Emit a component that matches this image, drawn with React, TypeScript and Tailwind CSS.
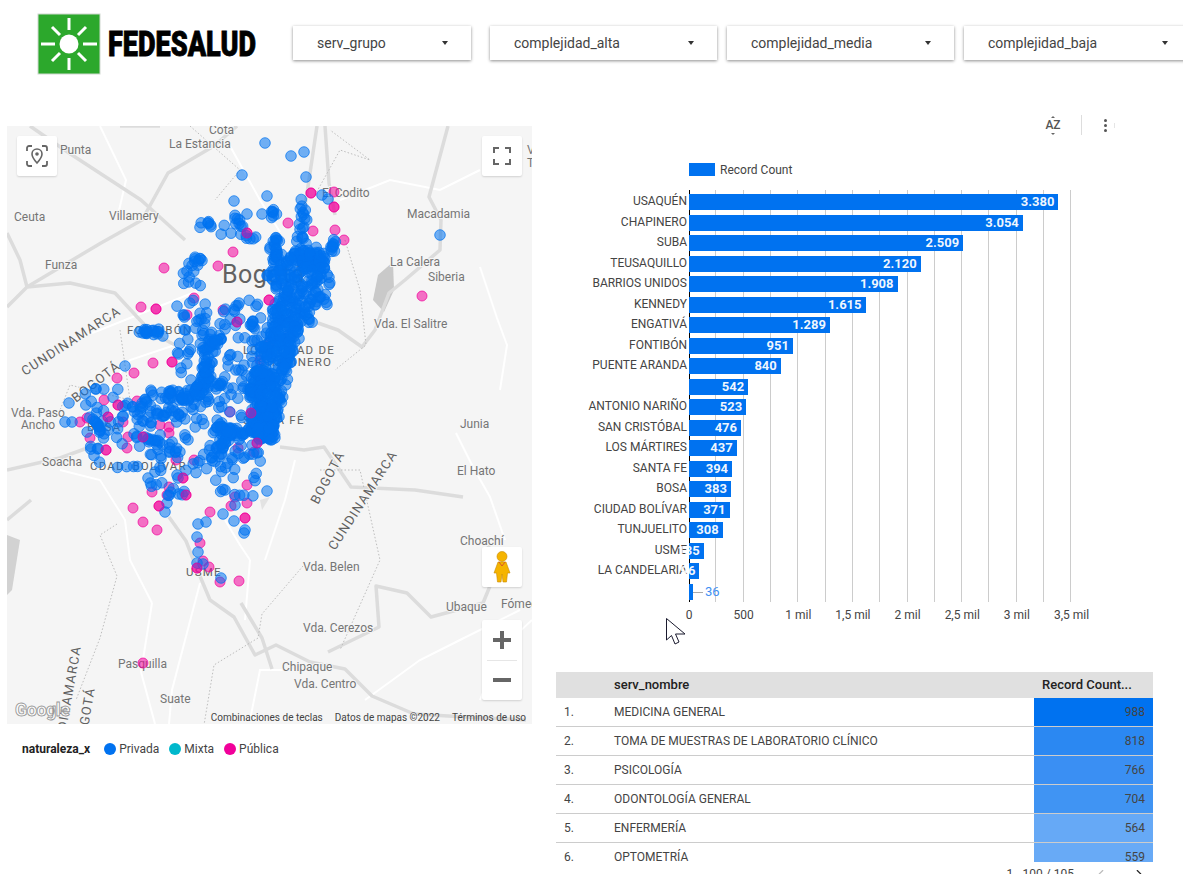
import { ChevronLeft, ChevronRight } from "lucide-react";

type Dot = { x: number; y: number; pink?: boolean };

const BLUE = "#0072f0";
const PINK = "#f1009a";

// seeded so that the picture is the same on every load
let seed = 12345;
function rnd() {
  seed = (seed * 16807) % 2147483647;
  return (seed - 1) / 2147483646;
}

function strand(points: number[][], n: number, jitter: number): Dot[] {
  const out: Dot[] = [];
  for (let i = 0; i < n; i++) {
    const t = rnd() * (points.length - 1);
    const k = Math.floor(t);
    const f = t - k;
    const a = points[k];
    const b = points[k + 1];
    out.push({
      x: a[0] + (b[0] - a[0]) * f + (rnd() - 0.5) * jitter * 2,
      y: a[1] + (b[1] - a[1]) * f + (rnd() - 0.5) * jitter * 2,
    });
  }
  return out;
}

function cloud(x0: number, y0: number, x1: number, y1: number, n: number): Dot[] {
  const out: Dot[] = [];
  for (let i = 0; i < n; i++) {
    out.push({ x: x0 + rnd() * (x1 - x0), y: y0 + rnd() * (y1 - y0) });
  }
  return out;
}

// the solid part of the city: [y, left, right]
const massSlabs = [
  [250, 290, 318],
  [265, 262, 332],
  [285, 272, 330],
  [305, 276, 326],
  [325, 268, 304],
  [345, 262, 296],
  [365, 256, 290],
  [385, 250, 286],
  [405, 246, 280],
  [425, 254, 278],
  [440, 258, 272],
];

function massDots(): Dot[] {
  const out: Dot[] = [];
  for (let i = 0; i < massSlabs.length - 1; i++) {
    const a = massSlabs[i];
    const b = massSlabs[i + 1];
    out.push(...cloud((a[1] + b[1]) / 2, a[0], (a[2] + b[2]) / 2, b[0], 55));
  }
  return out;
}

const blueDots: Dot[] = [
  ...cloud(176, 300, 262, 420, 130),
  ...cloud(85, 385, 245, 470, 120),
  ...cloud(150, 440, 262, 500, 45),
  ...strand([[303, 199], [303, 226], [300, 259], [312, 262], [323, 266]], 45, 5),
  ...strand([[277, 236], [273, 253], [282, 280]], 26, 4),
  ...strand([[234, 216], [243, 233], [253, 241]], 14, 4),
  ...strand([[197, 224], [213, 226], [233, 239]], 10, 5),
  ...strand([[277, 206], [273, 216]], 7, 3),
  ...strand([[187, 254], [202, 256], [193, 263], [183, 281], [200, 289], [217, 279]], 18, 5),
  ...strand([[335, 233], [333, 249], [323, 266], [318, 240]], 16, 3),
  ...strand([[135, 410], [159, 393], [189, 397], [206, 380]], 55, 5),
  ...strand([[206, 380], [210, 347], [216, 332]], 40, 7),
  ...strand([[216, 430], [240, 432], [270, 430]], 45, 4),
  ...strand([[210, 463], [223, 443], [230, 432]], 25, 4),
  ...strand([[160, 412], [175, 412]], 14, 5),
  ...strand([[95, 420], [100, 432]], 9, 2),
  ...strand([[140, 330], [165, 335]], 18, 4),
  ...strand([[150, 440], [175, 452]], 14, 4),
  { x: 265, y: 143 }, { x: 291, y: 156 }, { x: 304, y: 152 }, { x: 242, y: 175 }, { x: 306, y: 177 },
  { x: 440, y: 235 }, { x: 234, y: 201 }, { x: 267, y: 196 }, { x: 262, y: 214 }, { x: 247, y: 214 },
  { x: 322, y: 195 }, { x: 328, y: 199 }, { x: 125, y: 366 }, { x: 69, y: 403 }, { x: 65, y: 422 },
  { x: 72, y: 422 }, { x: 267, y: 491 }, { x: 167, y: 503 }, { x: 165, y: 512 }, { x: 198, y: 524 },
  { x: 206, y: 522 }, { x: 223, y: 514 }, { x: 234, y: 521 }, { x: 245, y: 530 }, { x: 244, y: 533 },
  { x: 235, y: 505 }, { x: 197, y: 537 }, { x: 198, y: 552 }, { x: 197, y: 563 }, { x: 203, y: 564 },
  { x: 221, y: 578 }, { x: 155, y: 472 }, { x: 148, y: 478 }, { x: 178, y: 478 }, { x: 225, y: 490 },
  ...massDots(),
];

const pinkDots: Dot[] = [
  [311, 193], [334, 192], [344, 240], [335, 230], [334, 207], [422, 296], [164, 268], [141, 307], [156, 309],
  [194, 298], [187, 315], [153, 363], [172, 362], [134, 373], [117, 378], [104, 400], [118, 405], [137, 401],
  [80, 422], [87, 418], [108, 417], [123, 422], [90, 438], [128, 437], [143, 437], [160, 425], [169, 427],
  [169, 433], [106, 450], [127, 448], [176, 460], [194, 460], [183, 478], [169, 487], [152, 492], [167, 495],
  [186, 495], [247, 485], [235, 497], [230, 412], [251, 413], [274, 408], [238, 448], [254, 452], [257, 443],
  [233, 252], [218, 266], [223, 310], [269, 300], [270, 342], [270, 380], [260, 360], [237, 322], [133, 508],
  [143, 522], [157, 530], [159, 506], [210, 512], [231, 506], [247, 503], [245, 518], [200, 543], [203, 561],
  [209, 567], [197, 568], [220, 582], [239, 581], [143, 663], [247, 233], [288, 223], [313, 231],
].map(([x, y]) => ({ x, y }));

const grayRoads = [
  "M7 307 L27 287 L70 283 L115 293 L152 333 L175 345",
  "M27 287 L101 243 L142 220 L168 173 L214 146 L237 126",
  "M30 126 L69 153 L141 200 L185 240",
  "M7 233 L20 260 L27 287",
  "M317 126 L306 200 L300 225",
  "M325 126 L329 183 L335 215",
  "M318 323 L338 330 L362 347 L375 330 L389 293 L405 280 L440 250 L441 220 L429 197 L448 126",
  "M169 517 L186 541 L197 569 L210 600 L234 617 L255 655 L276 645 L310 662 L345 669 L372 696 L414 714 L465 717 L526 720",
  "M241 603 L262 638 L272 669",
  "M328 652 L379 627 L376 586 L407 593 L431 617 L483 603 L497 569 L488 545",
  "M280 447 L304 450 L324 447 L351 487 L415 490 L463 497",
  "M7 470 L60 458 L101 443",
  "M7 520 L31 500",
  "M160 126 L120 126",
];

const whiteRoads = [
  "M230 146 L260 200 L280 232",
  "M456 433 L473 467 L490 497 L505 540",
  "M480 267 L497 318 L507 345 L500 390",
  "M200 583 L172 690 L169 724",
  "M141 672 L155 724",
  "M152 603 L141 672",
  "M340 200 L390 180 L440 190 L480 170",
  "M100 126 L126 180 L118 215",
  "M60 345 L100 330 L150 310 L200 290",
  "M60 470 L100 480 L125 520 L130 560 L152 603",
  "M250 560 L245 620",
  "M365 700 L420 660 L460 640 L520 610",
  "M250 720 L260 670 L330 670",
  "M225 520 L240 545 L250 560",
  "M100 400 L130 360 L175 345",
  "M295 460 L285 500 L265 560",
  "M480 700 L500 650 L532 620",
];

const dottedLines = [
  "M303 566 L262 614 L258 638 L214 665 L203 731",
  "M117 524 L100 535 L117 576 L100 638 L76 700",
  "M345 240 L360 290 L366 345 L335 370",
  "M320 470 L360 470 L380 560 L340 650",
  "M190 126 L240 170 L215 200",
  "M315 195 L340 150 L370 160 L330 130",
  "M120 330 L130 400 L70 385 L60 410",
];

const places: [string, number, number][] = [
  ["Cota", 209, 134],
  ["La Estancia", 169, 148],
  ["Punta", 60, 154],
  ["Ceuta", 14, 221],
  ["Villamery", 109, 220],
  ["Funza", 45, 269],
  ["Macadamia", 407, 218],
  ["La Calera", 390, 266],
  ["Siberia", 428, 281],
  ["Vda. El Salitre", 374, 328],
  ["El Codito", 322, 197],
  ["Vda. Paso", 11, 417],
  ["Ancho", 21, 429],
  ["Soacha", 42, 466],
  ["Junia", 460, 428],
  ["El Hato", 457, 475],
  ["Choachí", 460, 545],
  ["Vda. Belen", 303, 571],
  ["Ubaque", 446, 611],
  ["Fómeque", 501, 608],
  ["Vda. Cerezos", 303, 632],
  ["Chipaque", 282, 671],
  ["Vda. Centro", 294, 688],
  ["Pasquilla", 118, 668],
  ["Suate", 160, 703],
  ["V", 527, 154],
  ["T", 527, 167],
];

const districts: [string, number, number][] = [
  ["FONTIBÓN", 127, 334],
  ["LOCALIDAD DE", 243, 354],
  ["CHAPINERO", 258, 366],
  ["SANTA FÉ", 243, 424],
  ["BOSA", 87, 431],
  ["CDAD. BOLÍVAR", 90, 470],
  ["USME", 186, 576],
];

const rotated: [string, number, number, number][] = [
  ["CUNDINAMARCA", 25, 376, -33],
  ["BOGOTÁ", 76, 403, -38],
  ["BOGOTÁ", 318, 505, -62],
  ["CUNDINAMARCA", 335, 551, -57],
  ["CUNDINAMARCA", 61, 760, -80],
  ["BOGOTÁ", 85, 745, -80],
];

const bars: [string, number, string][] = [
  ["USAQUÉN", 3380, "3.380"],
  ["CHAPINERO", 3054, "3.054"],
  ["SUBA", 2509, "2.509"],
  ["TEUSAQUILLO", 2120, "2.120"],
  ["BARRIOS UNIDOS", 1908, "1.908"],
  ["KENNEDY", 1615, "1.615"],
  ["ENGATIVÁ", 1289, "1.289"],
  ["FONTIBÓN", 951, "951"],
  ["PUENTE ARANDA", 840, "840"],
  ["", 542, "542"],
  ["ANTONIO NARIÑO", 523, "523"],
  ["SAN CRISTÓBAL", 476, "476"],
  ["LOS MÁRTIRES", 437, "437"],
  ["SANTA FE", 394, "394"],
  ["BOSA", 383, "383"],
  ["CIUDAD BOLÍVAR", 371, "371"],
  ["TUNJUELITO", 308, "308"],
  ["USME", 135, "135"],
  ["LA CANDELARIA", 96, "96"],
];

const ticks = ["0", "500", "1 mil", "1,5 mil", "2 mil", "2,5 mil", "3 mil", "3,5 mil"];
const gridLines = Array.from({ length: 14 }, (_, i) => i);

const rows = [
  { name: "MEDICINA GENERAL", value: 988, bg: "bg-[#0072f0]" },
  { name: "TOMA DE MUESTRAS DE LABORATORIO CLÍNICO", value: 818, bg: "bg-[#2b88f2]" },
  { name: "PSICOLOGÍA", value: 766, bg: "bg-[#3a8ff3]" },
  { name: "ODONTOLOGÍA GENERAL", value: 704, bg: "bg-[#4094f3]" },
  { name: "ENFERMERÍA", value: 564, bg: "bg-[#66a9f6]" },
  { name: "OPTOMETRÍA", value: 559, bg: "bg-[#68aaf6]" },
];

function Dropdown({ label, width, className }: { label: string; width: string; className: string }) {
  return (
    <div
      className={`${width} ${className} h-[34px] shrink-0 flex items-center justify-between pl-6 pr-[23px] bg-white text-[14px] text-[#444] shadow-[0_1px_3px_rgba(0,0,0,0.45)]`}
    >
      <span>{label}</span>
      <span className="w-0 h-0 border-x-[3.5px] border-x-transparent border-t-[4px] border-t-[#333]"></span>
    </div>
  );
}

function Logo() {
  return (
    <svg width="220" height="62" viewBox="0 0 220 62" className="ml-[37px] mt-[13px] shrink-0">
      <rect x="1" y="1" width="62" height="60" fill="#2ca82c" stroke="#cfd8cf" />
      <circle cx="32" cy="31" r="9.5" fill="#fff" />
      <g stroke="#fff" strokeWidth="3" strokeLinecap="butt">
        <path d="M32 5V17M32 45V57M4 31H18M46 31H60" />
        <path d="M15 14L23 22M41 40L49 48M49 14L41 22M23 40L15 48" />
      </g>
      <text
        x="71"
        y="43"
        fontSize="35"
        fontWeight="900"
        fill="#000"
        stroke="#000"
        strokeWidth="0.8"
        textLength="148"
        lengthAdjust="spacingAndGlyphs"
      >
        FEDESALUD
      </text>
    </svg>
  );
}

function MapDrawing() {
  return (
    <svg viewBox="7 126 525 598" width="525" height="598" className="block">
      <rect x="7" y="126" width="525" height="598" fill="#f5f5f5" />
      {/* terrain */}
      <path d="M373 300 L378 275 L393 262 L394 290 L384 312 Z" fill="#c9c9c9" />
      <path d="M7 535 L20 540 L12 590 L7 595 Z" fill="#d2d2d2" />
      <path d="M260 500 L270 497 L262 510 Z" fill="#e3e3e3" />
      {whiteRoads.map((d) => (
        <path key={d} d={d} fill="none" stroke="#fff" strokeWidth="2" />
      ))}
      {grayRoads.map((d) => (
        <path key={d} d={d} fill="none" stroke="#dcdcdc" strokeWidth="3.5" strokeLinejoin="round" />
      ))}
      {dottedLines.map((d) => (
        <path key={d} d={d} fill="none" stroke="#bdbdbd" strokeWidth="1" strokeDasharray="1.5 2" />
      ))}
      {/* labels */}
      <g fontSize="12" fill="#757575" stroke="#f5f5f5" strokeWidth="2" paintOrder="stroke">
        {places.map(([t, x, y]) => (
          <text key={t + x} x={x} y={y}>
            {t}
          </text>
        ))}
      </g>
      <g fontSize="11.5" fill="#616161" stroke="#f5f5f5" strokeWidth="2" paintOrder="stroke" letterSpacing="1.2">
        {districts.map(([t, x, y]) => (
          <text key={t} x={x} y={y}>
            {t}
          </text>
        ))}
        {rotated.map(([t, x, y, a]) => (
          <text key={t + x} x={x} y={y} fontSize="13" transform={`rotate(${a} ${x} ${y})`}>
            {t}
          </text>
        ))}
      </g>
      <text x="222" y="283" fontSize="25" fill="#616161" letterSpacing="0.5">
        Bogotá
      </text>
      {/* points */}
      {pinkDots.map((d, i) => (
        <circle key={i} cx={d.x} cy={d.y} r="5" fill={PINK} fillOpacity="0.55" stroke={PINK} strokeOpacity="0.7" />
      ))}
      {blueDots.map((d, i) => (
        <circle key={i} cx={d.x} cy={d.y} r="5.3" fill={BLUE} fillOpacity="0.55" stroke={BLUE} strokeOpacity="0.7" />
      ))}
      {pinkDots
        .filter((_, i) => i % 4 === 0)
        .map((d, i) => (
          <circle key={i} cx={d.x} cy={d.y} r="5" fill={PINK} fillOpacity="0.45" stroke={PINK} strokeOpacity="0.6" />
        ))}
      {/* google mark */}
      <text x="15" y="716" fontSize="18" fontWeight="700" fill="#fff" stroke="#9a9a9a" strokeWidth="0.9" letterSpacing="-0.5">
        Google
      </text>
    </svg>
  );
}

function MapPanel() {
  return (
    <div className="relative w-[525px] h-[598px] overflow-hidden">
      <MapDrawing />

      <div className="absolute left-[10px] top-[10px] w-10 h-10 bg-white rounded-[2px] shadow-[0_1px_2px_rgba(0,0,0,0.15)] flex items-center justify-center">
        <svg width="24" height="24" viewBox="0 0 24 24" fill="none">
          <path d="M2 7V4a2 2 0 0 1 2-2h3M17 2h3a2 2 0 0 1 2 2v3M22 17v3a2 2 0 0 1-2 2h-3M7 22H4a2 2 0 0 1-2-2v-3" stroke="#666" strokeWidth="1.8" />
          <path d="M12 5c-3 0-5 2.2-5 5 0 3.4 5 9 5 9s5-5.600 5-9c0-2.800-2-5-5-5z" stroke="#666" strokeWidth="1.6" />
          <circle cx="12" cy="10" r="1.800" fill="#666" />
        </svg>
      </div>

      <div className="absolute left-[475px] top-[10px] w-10 h-10 bg-white rounded-[2px] shadow-[0_1px_2px_rgba(0,0,0,0.15)] flex items-center justify-center">
        <svg width="18" height="18" viewBox="0 0 18 18" fill="none" stroke="#666" strokeWidth="2">
          <path d="M1 6V1H6M12 1H17V6M17 12V17H12M6 17H1V12" />
        </svg>
      </div>

      <div className="absolute left-[475px] top-[421px] w-10 h-10 bg-white rounded-[2px] shadow-[0_1px_2px_rgba(0,0,0,0.15)] flex items-center justify-center">
        <svg width="18" height="32" viewBox="0 0 18 32">
          <circle cx="9" cy="5.500" r="5" fill="#f5b400" stroke="#c98a00" strokeWidth="0.6" />
          <path d="M5 11H13L17 22H14.500L13.500 31H10L9 23L8 31H4.500L3.500 22H1Z" fill="#f5b400" stroke="#c98a00" strokeWidth="0.6" />
          <path d="M6 11L9 15L12 11" fill="none" stroke="#d9572b" strokeWidth="1" />
        </svg>
      </div>

      <div className="absolute left-[475px] top-[494px] w-10 h-20 bg-white rounded-[2px] shadow-[0_1px_2px_rgba(0,0,0,0.15)] flex flex-col items-center">
        <div className="h-10 w-full flex items-center justify-center">
          <svg width="18" height="18" viewBox="0 0 18 18" fill="#666">
            <path d="M7 0H11V7H18V11H11V18H7V11H0V7H7Z" />
          </svg>
        </div>
        <div className="w-[30px] h-px bg-[#e6e6e6]"></div>
        <div className="h-10 w-full flex items-center justify-center">
          <div className="w-[18px] h-1 bg-[#666]"></div>
        </div>
      </div>

      <div className="absolute right-0 bottom-0 h-[14px] flex items-center text-[10px] text-[#444] pr-[6px] whitespace-nowrap">
        <span className="mr-3">Combinaciones de teclas</span>
        <span className="mr-3">Datos de mapas ©2022</span>
        <span>Términos de uso</span>
      </div>
    </div>
  );
}

function LegendDot({ color, label }: { color: string; label: string }) {
  return (
    <div className="flex items-center gap-[3px] mr-[10px]">
      <span className={`${color} w-3 h-3 rounded-full`}></span>
      <span className="text-[12px] text-[#444]">{label}</span>
    </div>
  );
}

function BarChart() {
  return (
    <div className="w-full">
      {/* legend */}
      <div className="flex items-center ml-[157px] mt-[18px] h-[13px]">
        <span className="w-[26px] h-[13px] bg-[#0072f0]"></span>
        <span className="ml-[5px] text-[12px] text-[#444]">Record Count</span>
      </div>

      <div className="relative mt-[14px] h-[412px] pt-1">
        {/* grid */}
        <div className="absolute left-[157px] top-0 bottom-0 flex">
          {gridLines.map((i) => (
            <div key={i} className="w-[27.32px] border-r border-[#cccccc]"></div>
          ))}
        </div>
        <div className="absolute left-[156.5px] top-0 bottom-0 w-[1.5px] bg-black"></div>

        <div className="relative">
          {bars.map(([label, value, text]) => (
            <div key={text} className="flex h-4 mb-[4.5px]">
              <div className="w-[155px] mr-[2px] shrink-0 text-right text-[12px] leading-[15px] text-[#444] whitespace-nowrap">
                {label}
              </div>
              <div className="relative h-4 bg-[#0072f0]" style={{ width: value * 0.1093 }}>
                <span className="absolute right-[4px] top-0 text-[13px] leading-4 font-bold text-white/95 whitespace-nowrap">
                  {text}
                </span>
              </div>
            </div>
          ))}
          <div className="flex h-4">
            <div className="w-[157px] shrink-0"></div>
            <div className="w-1 h-4 bg-[#0072f0]"></div>
            <div className="w-[10px] h-px mt-2 bg-[#aaa]"></div>
            <span className="ml-[2px] text-[13px] leading-4 text-[#3f8ff3]">36</span>
          </div>
        </div>
      </div>

      {/* axis labels */}
      <div className="flex ml-[157px] mt-[5px] text-[12px] leading-4 text-[#444]">
        {ticks.map((t) => (
          <div key={t} className="w-[54.65px] shrink-0">
            <div className="w-[54.65px] -ml-[27.3px] text-center whitespace-nowrap">{t}</div>
          </div>
        ))}
      </div>
    </div>
  );
}

function ServicesTable() {
  return (
    <div className="ml-[24px] w-[597px]">
      <div className="h-[190px] overflow-hidden">
        <div className="flex h-[26px] items-center bg-[#e0e0e0] text-[13px] font-medium text-[#222]">
          <div className="w-[58px] shrink-0"></div>
          <div className="flex-1">serv_nombre</div>
          <div className="w-[119px] shrink-0 pl-2 whitespace-nowrap">Record Count...</div>
        </div>
        {rows.map((row, i) => (
          <div key={row.name} className="flex h-[29px] border-b border-[#cccccc] text-[12px] text-[#444]">
            <div className="w-[58px] shrink-0 pl-2 leading-[28px]">{i + 1}.</div>
            <div className="flex-1 leading-[28px]">{row.name}</div>
            <div className={`${row.bg} w-[119px] shrink-0 pr-2 text-right leading-[28px]`}>{row.value}</div>
          </div>
        ))}
      </div>
      <div className="flex items-center justify-end mt-[5px] pr-[8px] text-[12px] leading-[14px] text-[#444]">
        <span className="mr-5">1 - 100 / 105</span>
        <ChevronLeft size={14} className="text-[#bbb] mr-6" />
        <ChevronRight size={14} className="text-[#222] -mr-[1px]" />
      </div>
    </div>
  );
}

export default function App() {
  return (
    <div className="relative w-[1183px] h-[874px] overflow-hidden bg-white font-['Roboto',sans-serif]">
      {/* HEADER */}
      <div className="flex items-start h-[105px]">
        <Logo />
        <Dropdown label="serv_grupo" width="w-[178px]" className="mt-[26px] ml-[36px]" />
        <Dropdown label="complejidad_alta" width="w-[227px]" className="mt-[26px] ml-[19px]" />
        <Dropdown label="complejidad_media" width="w-[227px]" className="mt-[26px] ml-[10px]" />
        <Dropdown label="complejidad_baja" width="w-[227px]" className="mt-[26px] ml-[10px]" />
      </div>

      <div className="flex">
        {/* MAP */}
        <div className="w-[532px] shrink-0 pl-[7px] pt-[21px]">
          <MapPanel />
          <div className="flex items-center ml-[15px] mt-[18px] h-[14px]">
            <span className="text-[12px] font-bold text-[#222] mr-[14px]">naturaleza_x</span>
            <LegendDot color="bg-[#0072f0]" label="Privada" />
            <LegendDot color="bg-[#00b8cc]" label="Mixta" />
            <LegendDot color="bg-[#f1009a]" label="Pública" />
          </div>
        </div>

        {/* CHART + TABLE */}
        <div className="flex-1 min-w-0">
          <div className="flex items-center h-10 pl-[513px]">
            <div className="relative w-4 h-5 flex items-center justify-center text-[12px] font-medium text-[#555] leading-none">
              <span className="absolute top-[1px] w-0 h-0 border-x-[2px] border-x-transparent border-b-[2px] border-b-[#666]"></span>
              AZ
              <span className="absolute bottom-[0px] w-0 h-0 border-x-[2px] border-x-transparent border-t-[2px] border-t-[#666]"></span>
            </div>
            <div className="w-px h-5 bg-[#ddd] ml-[20px]"></div>
            <div className="flex flex-col gap-[2px] ml-[22px]">
              <span className="w-[3px] h-[3px] rounded-full bg-[#555]"></span>
              <span className="w-[3px] h-[3px] rounded-full bg-[#555]"></span>
              <span className="w-[3px] h-[3px] rounded-full bg-[#555]"></span>
            </div>
            <div className="w-px h-[5px] bg-[#e5e5e5] ml-[7px]"></div>
          </div>
          <BarChart />
          <div className="mt-[49px]">
            <ServicesTable />
          </div>
        </div>
      </div>

      {/* CURSOR */}
      <svg width="22" height="30" viewBox="0 0 22 30" className="absolute left-[665px] top-[617px]">
        <path d="M1.500 1.500V23L6.500 18.500L10 27L14 25L10.500 17H20Z" fill="#fff" stroke="#1a1a2e" strokeWidth="1" />
      </svg>
    </div>
  );
}
